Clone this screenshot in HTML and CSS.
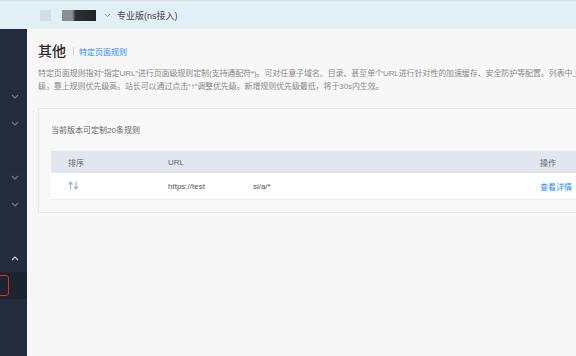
FILE: index.html
```html
<!DOCTYPE html>
<html lang="zh-CN">
<head>
    <meta charset="UTF-8">
    <title>特定页面规则</title>
    <link rel="stylesheet" href="styles.css">
</head>
<body>

    <div class="topbar">
        <span class="logo-box"></span>
        <span class="user-box"></span>
        <svg class="caret" width="7" height="5" viewBox="0 0 7 5"><path d="M1 1l2.5 2.5L6 1" fill="none" stroke="#8a96a3" stroke-width="1"/></svg>
        <span class="plan">专业版(ns接入)</span>
    </div>

    <div class="layout">
        <div class="sidebar">
            <div class="nav-row"></div>
            <div class="nav-row"></div>
            <div class="nav-row"><svg width="8" height="5" viewBox="0 0 8 5"><path d="M1 1l3 3 3-3" fill="none" stroke="#6b7a8e" stroke-width="1.2"/></svg></div>
            <div class="nav-row"><svg width="8" height="5" viewBox="0 0 8 5"><path d="M1 1l3 3 3-3" fill="none" stroke="#6b7a8e" stroke-width="1.2"/></svg></div>
            <div class="nav-row"></div>
            <div class="nav-row"><svg width="8" height="5" viewBox="0 0 8 5"><path d="M1 1l3 3 3-3" fill="none" stroke="#6b7a8e" stroke-width="1.2"/></svg></div>
            <div class="nav-row"><svg width="8" height="5" viewBox="0 0 8 5"><path d="M1 1l3 3 3-3" fill="none" stroke="#6b7a8e" stroke-width="1.2"/></svg></div>
            <div class="nav-row"></div>
            <div class="nav-row"><svg width="8" height="5" viewBox="0 0 8 5"><path d="M1 4l3-3 3 3" fill="none" stroke="#c4ccd6" stroke-width="1.2"/></svg></div>
            <div class="nav-row active"><span class="mark"></span></div>
        </div>

        <div class="main">
            <div class="page-head">
                <h1>其他</h1>
                <span class="divider"></span>
                <span class="sub">特定页面规则</span>
            </div>
            <p class="desc">特定页面规则指对“指定URL”进行页面级规则定制(支持通配符*)。可对任意子域名、目录、甚至单个URL进行针对性的加速缓存、安全防护等配置。列表中上<br>级，靠上规则优先级高。站长可以通过点击“↑”调整优先级。新增规则优先级最低，将于30s内生效。</p>

            <div class="card">
                <p class="limit">当前版本可定制20条规则</p>
                <table class="rules">
                    <thead>
                        <tr>
                            <th class="col-sort">排序</th>
                            <th class="col-url">URL</th>
                            <th>操作</th>
                        </tr>
                    </thead>
                    <tbody>
                        <tr>
                            <td class="col-sort">
                                <svg width="11" height="9" viewBox="0 0 11 9"><path d="M2.5 8.5V1.5M0.5 3.5l2-2.5 2 2.5" fill="none" stroke="#a9bbd3" stroke-width="1.3"/><path d="M8 0.5v7M6 5.5l2 2.5 2-2.5" fill="none" stroke="#a9bbd3" stroke-width="1.3"/></svg>
                            </td>
                            <td class="col-url">https://test<span class="gap"></span>si/a/*</td>
                            <td><a class="link">查看详情</a></td>
                        </tr>
                    </tbody>
                </table>
            </div>
        </div>
    </div>

</body>
</html>
```

FILE: styles.css
```css
body {
    margin: 0;
    font-family: "Liberation Sans", "Noto Sans CJK SC", sans-serif;
    background-color: #f7f7f7;
    color: #333;
    overflow: hidden;
    width: 576px;
    height: 356px;
}
.topbar {
    height: 28px;
    border-top: 1px solid #d5dbe0;
    background-color: #e1eff7;
    display: flex;
    align-items: center;
    padding-left: 40px;
}
.logo-box {
    width: 11px;
    height: 11px;
    background-color: #d3dee6;
}
.user-box {
    width: 34px;
    height: 11px;
    margin-left: 11px;
    background: linear-gradient(to right, #8a8f93 0, #8a8f93 30%, #2b2f33 40%, #1f2226 100%);
}
.caret {
    margin-left: 8px;
}
.plan {
    margin-left: 6px;
    font-size: 9px;
    color: #444;
}
.layout {
    display: flex;
    height: 327px;
}
.sidebar {
    width: 27px;
    flex-shrink: 0;
    background-color: #222c3c;
}
.nav-row {
    height: 27px;
    display: flex;
    align-items: center;
    justify-content: flex-end;
    padding-right: 8px;
}
.nav-row.active {
    background-color: #1b2431;
    justify-content: flex-start;
    padding-right: 0;
}
.mark {
    width: 10px;
    height: 19px;
    margin-left: -3px;
    border: 1.5px solid #e8262a;
    border-radius: 3px;
}
.main {
    flex: 1;
    padding: 11px 0 0 11px;
    min-width: 0;
}
.page-head {
    display: flex;
    align-items: center;
    height: 20px;
}
h1 {
    margin: 0;
    font-size: 14px;
    font-weight: 500;
    color: #2b2b2b;
}
.divider {
    width: 1px;
    height: 8px;
    background-color: #d5d5d5;
    margin: 2px 5px 0 7px;
}
.sub {
    font-size: 8px;
    color: #2d8cf0;
    margin-top: 2px;
}
.desc {
    margin: 7px 0 0;
    font-size: 8px;
    line-height: 13px;
    letter-spacing: -0.1px;
    color: #8a8a8a;
    white-space: nowrap;
}
.card {
    margin-top: 15px;
    width: 560px;
    border: 1px solid #e8e8e8;
    background-color: #f8f8f8;
    padding: 16px 0 12px 12px;
}
.limit {
    margin: 0 0 14px;
    font-size: 8px;
    line-height: 12px;
    color: #666;
}
.rules {
    width: 100%;
    border-collapse: collapse;
    font-size: 8px;
    color: #555;
}
.rules th {
    height: 22px;
    padding: 0;
    text-align: left;
    font-weight: normal;
    background-color: #e2e7ef;
    color: #666;
}
.rules td {
    height: 26px;
    padding: 0;
    background-color: #ffffff;
    border-bottom: 1px solid #ebebeb;
}
.rules .col-sort {
    width: 100px;
    padding-left: 17px;
}
.rules .col-url {
    width: 372px;
}
.gap {
    display: inline-block;
    width: 48px;
}
.link {
    color: #2d8cf0;
}
```
